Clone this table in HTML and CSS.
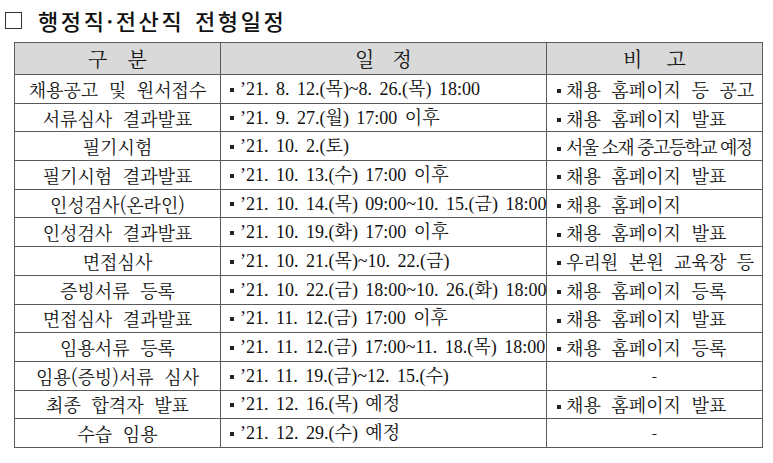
FILE: index.html
```html
<!DOCTYPE html>
<html lang="ko">
<head>
<meta charset="utf-8">
<link rel="stylesheet" href="styles.css">
</head>
<body>
<div class="page">
  <h1 class="title"><span class="box"></span><span class="title-text">행정직·전산직 전형일정</span></h1>
  <table class="sched">
    <colgroup>
      <col class="c1"><col class="c2"><col class="c3">
    </colgroup>
    <thead>
      <tr><th class="h1">구 분</th><th class="h2">일 정</th><th class="h3">비 고</th></tr>
    </thead>
    <tbody>
      <tr><td class="k">채용공고 및 원서접수</td><td class="d"><span class="b"></span>’21. 8. 12.(목)~8. 26.(목) 18:00</td><td class="n"><span class="b"></span>채용 홈페이지 등 공고</td></tr>
      <tr><td class="k">서류심사 결과발표</td><td class="d"><span class="b"></span>’21. 9. 27.(월) 17:00 이후</td><td class="n"><span class="b"></span>채용 홈페이지 발표</td></tr>
      <tr><td class="k">필기시험</td><td class="d"><span class="b"></span>’21. 10. 2.(토)</td><td class="n tight"><span class="b"></span>서울 소재 중고등학교 예정</td></tr>
      <tr><td class="k">필기시험 결과발표</td><td class="d"><span class="b"></span>’21. 10. 13.(수) 17:00 이후</td><td class="n"><span class="b"></span>채용 홈페이지 발표</td></tr>
      <tr><td class="k">인성검사(온라인)</td><td class="d"><span class="b"></span>’21. 10. 14.(목) 09:00~10. 15.(금) 18:00</td><td class="n"><span class="b"></span>채용 홈페이지</td></tr>
      <tr><td class="k">인성검사 결과발표</td><td class="d"><span class="b"></span>’21. 10. 19.(화) 17:00 이후</td><td class="n"><span class="b"></span>채용 홈페이지 발표</td></tr>
      <tr><td class="k">면접심사</td><td class="d"><span class="b"></span>’21. 10. 21.(목)~10. 22.(금)</td><td class="n"><span class="b"></span>우리원 본원 교육장 등</td></tr>
      <tr><td class="k">증빙서류 등록</td><td class="d"><span class="b"></span>’21. 10. 22.(금) 18:00~10. 26.(화) 18:00</td><td class="n"><span class="b"></span>채용 홈페이지 등록</td></tr>
      <tr><td class="k">면접심사 결과발표</td><td class="d"><span class="b"></span>’21. 11. 12.(금) 17:00 이후</td><td class="n"><span class="b"></span>채용 홈페이지 발표</td></tr>
      <tr><td class="k">임용서류 등록</td><td class="d"><span class="b"></span>’21. 11. 12.(금) 17:00~11. 18.(목) 18:00</td><td class="n"><span class="b"></span>채용 홈페이지 등록</td></tr>
      <tr><td class="k">임용(증빙)서류 심사</td><td class="d"><span class="b"></span>’21. 11. 19.(금)~12. 15.(수)</td><td class="n c">-</td></tr>
      <tr><td class="k">최종 합격자 발표</td><td class="d"><span class="b"></span>’21. 12. 16.(목) 예정</td><td class="n"><span class="b"></span>채용 홈페이지 발표</td></tr>
      <tr><td class="k">수습 임용</td><td class="d"><span class="b"></span>’21. 12. 29.(수) 예정</td><td class="n c">-</td></tr>
    </tbody>
  </table>
</div>
</body>
</html>
```

FILE: styles.css
```css
html, body {
  margin: 0;
  padding: 0;
  background: #ffffff;
}
.page {
  padding: 5px 0 0 14px;
  font-family: "Noto Serif CJK KR", "Liberation Serif", "Noto Sans CJK KR", serif;
  color: #111;
}
.title {
  display: flex;
  align-items: center;
  margin: 0 0 7px -9px;
  height: 30px;
  font-family: "Noto Sans CJK KR", sans-serif;
  font-weight: 500;
  font-size: 22px;
  letter-spacing: 2.6px;
  word-spacing: 2px;
  color: #111;
}
.box {
  width: 15px;
  height: 15px;
  border: 1px solid #333;
  margin-right: 16px;
  flex: none;
}
.sched {
  border-collapse: collapse;
  width: 748px;
  table-layout: fixed;
  border: 1px solid #333;
}
.c1 { width: 206px; }
.c2 { width: 326px; }
.c3 { width: 216px; }
th, td {
  border: 1px solid #5a5a5a;
  padding: 0;
  height: 27.7px;
  font-size: 18px;
  white-space: nowrap;
  overflow: hidden;
  line-height: 26px;
}
th {
  height: 31px;
  background: #d9d9d9;
  font-weight: 400;
  text-align: center;
  font-size: 20px;
}
th.h1 { word-spacing: 14px; }
th.h2 { word-spacing: 12px; }
th.h3 { word-spacing: 18px; }
td.k { text-align: center; word-spacing: 5px; }
td.d {
  padding-left: 9px;
  font-family: "Liberation Serif", "Noto Serif CJK KR", "Noto Sans CJK KR", serif;
  word-spacing: 3px;
}
td.n { padding-left: 10px; word-spacing: 5px; }
td.n .b { margin-right: 5px; }
td.c { text-align: center; padding-left: 0; }
td.tight { letter-spacing: -1.6px; word-spacing: 0; }
.b {
  display: inline-block;
  width: 4px;
  height: 4px;
  background: #222;
  vertical-align: middle;
  margin: 0 6px 2px 0;
}
```
